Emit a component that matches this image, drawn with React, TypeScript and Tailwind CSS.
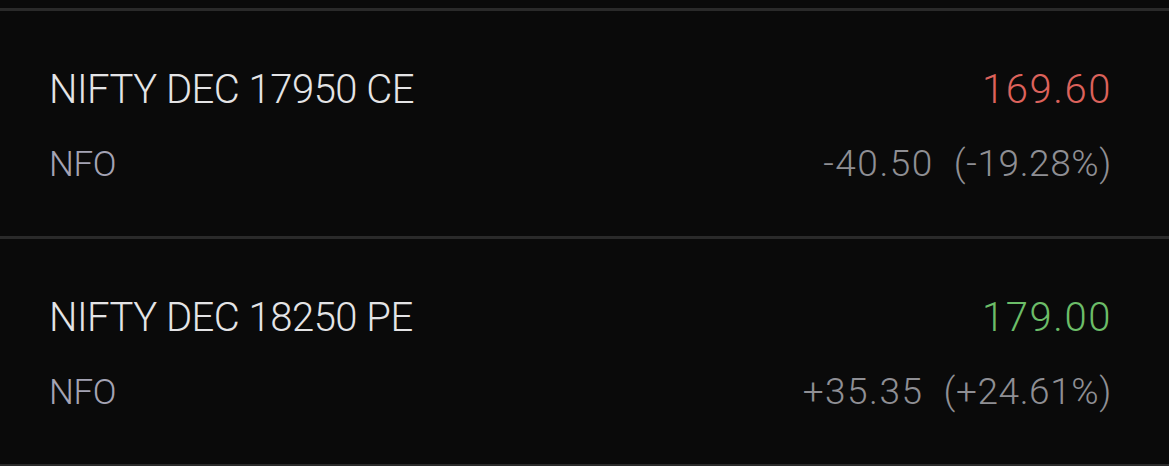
const quotes = [
  { name: "NIFTY DEC 17950 CE", exchange: "NFO", ltp: "169.60", change: "-40.50", pct: "(-19.28%)", up: false },
  { name: "NIFTY DEC 18250 PE", exchange: "NFO", ltp: "179.00", change: "+35.35", pct: "(+24.61%)", up: true },
];

function QuoteRow({ q }: { q: (typeof quotes)[number] }) {
  return (
    <div className="h-[228px] border-b-[3px] border-[#2a2a2a] pl-[49px] pr-[57px] pt-[59px]">
      <div className="flex justify-between items-baseline leading-[40px]">
        <span className="text-[40px] tracking-[-0.5px] text-[#e4e4e6]">{q.name}</span>
        <span className={`text-[40px] tracking-[1.6px] ${q.up ? "text-[#6cbd68]" : "text-[#dc625b]"}`}>{q.ltp}</span>
      </div>
      <div className="mt-[34px] flex justify-between items-baseline leading-[40px]">
        <span className="text-[35px] tracking-[-0.4px] text-[#a4a3b4]">{q.exchange}</span>
        <span className="text-[37px] text-[#8f8f94]">
          <span className="tracking-[1.5px]">{q.change}</span>
          <span className="ml-[20px] tracking-[0.6px]">{q.pct}</span>
        </span>
      </div>
    </div>
  );
}

export default function App() {
  return (
    <div className="h-[466px] w-[1169px] bg-[#0a0a0a] pt-[8px] font-['Roboto',sans-serif] font-light">
      <div className="border-t-[3px] border-[#2a2a2a]">
        {quotes.map((q) => (
          <QuoteRow key={q.name} q={q} />
        ))}
      </div>
    </div>
  );
}
